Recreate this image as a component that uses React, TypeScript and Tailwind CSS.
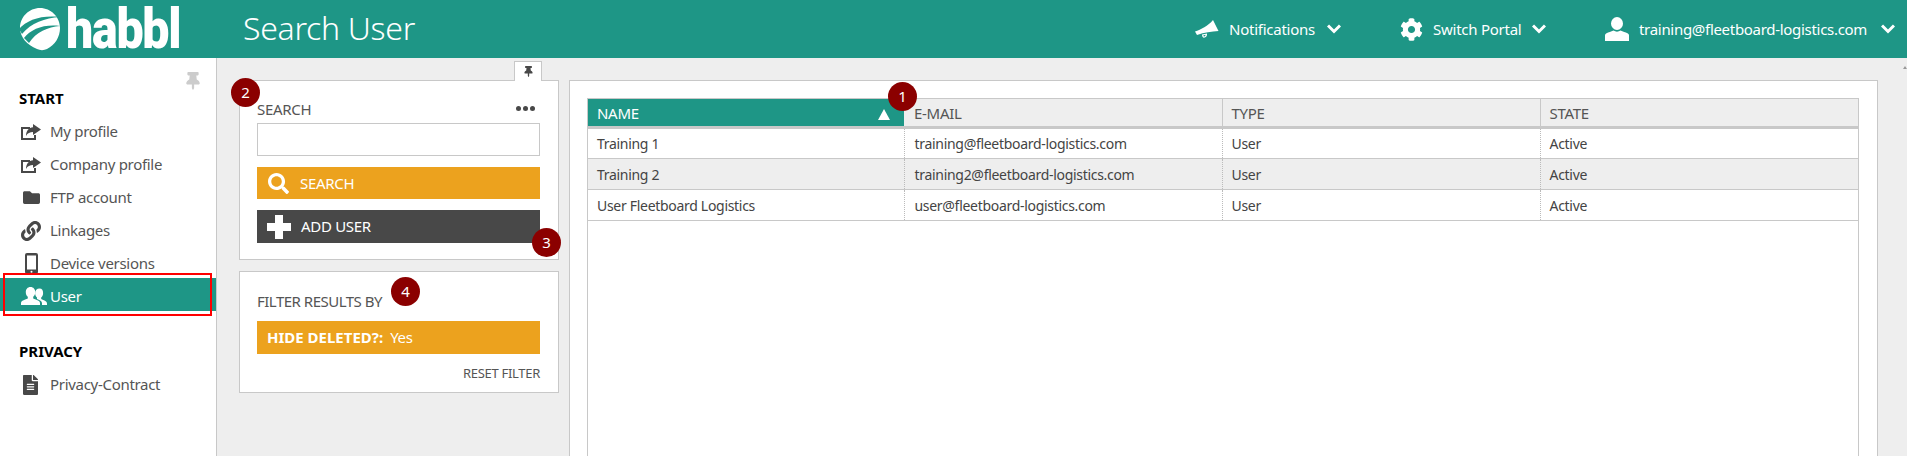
import { ReactNode } from "react"
import { FaCog, FaFileAlt, FaFolder, FaLink, FaSearch, FaThumbtack } from "react-icons/fa"

function ShareIcon() {
  return (
    <svg viewBox="0 0 20 16" className="h-[16px] w-[20px]" fill="currentColor">
      <path d="M0 3h9v2H2v9h11v-3h2v5H0z" />
      <path d="M12 0l8 5.500-8 5.500V8C9 8 6.500 9 5 12c0-5 3-8.500 7-8.700z" />
    </svg>
  )
}

function PhoneIcon() {
  return (
    <svg viewBox="0 0 13 21" className="ml-[4px] h-[21px] w-[13px]" fill="currentColor">
      <path d="M2 0h9a2 2 0 0 1 2 2v17a2 2 0 0 1-2 2H2a2 2 0 0 1-2-2V2a2 2 0 0 1 2-2zm0 2.500V16.500h9V2.500z" />
      <circle cx="6.500" cy="18.700" r="1" fill="#fff" />
    </svg>
  )
}

function UsersIcon() {
  return (
    <svg viewBox="0 0 26 19" className="h-[19px] w-[26px]" fill="currentColor">
      <path d="M18.500 1.500c-2.600 0-4.400 2-4.400 4.800 0 1.800.8 3.400 1.900 4.300v1.300c1 .5 2.400 1 3.500 1.800 1 .7 1.500 1.700 1.500 2.800V18H26v-1.300c0-1-.4-1.900-1.300-2.400-1.500-.9-3.300-1.600-4.500-2.200v-1.500c1.100-.9 1.900-2.500 1.900-4.300 0-2.800-1-4.800-3.600-4.800z" />
      <path d="M9.500 0C6.600 0 4.800 2.200 4.800 5.200c0 1.900.8 3.600 2 4.600v1.600c-1.300.6-3.800 1.200-5.800 2.500-.7.500-1 1.200-1 2V18h19v-2.100c0-.8-.4-1.500-1-2-2-1.300-4.500-1.900-5.800-2.500V9.800c1.200-1 2-2.700 2-4.600C14.200 2.200 12.400 0 9.500 0z" />
    </svg>
  )
}

function Globe() {
  return (
    <svg viewBox="0 0 42 44" className="h-[44px] w-[42px]">
      <path d="M21 1C32 1 41 10 41 21c0 9-5 17-13 21-3 1.500-7 1.500-10 0C8 38 1 30 1 21 1 10 10 1 21 1z" fill="#fff" />
      <path d="M0 22C8 13 22 8 41 10 26 11 12 16 3 27z" fill="#1e9686" />
      <path d="M5 31C12 22 25 17 41 19 29 20 17 25 10 36z" fill="#1e9686" />
    </svg>
  )
}

function Chevron() {
  return (
    <svg viewBox="0 0 14 10" className="ml-[12px] h-[10px] w-[14px]" fill="none" stroke="currentColor" strokeWidth="3">
      <path d="M1 1.500l6 6 6-6" />
    </svg>
  )
}

function Megaphone() {
  return (
    <svg viewBox="0 0 24 18" className="h-[18px] w-[24px]" fill="currentColor">
      <path d="M0 11.500C6 9.500 13 6 18 0l5.500 11c-7 .3-14 1.500-21.500 4z" />
      <path d="M7 14.500l5-1c.3 2.300-1 4.200-3 4.200-1.300 0-2-1.200-2-3.200zm1.500.7c0 1 .2 1.300.7 1.300.8 0 1.300-.8 1.300-1.700z" />
    </svg>
  )
}

function UserIcon() {
  return (
    <svg viewBox="0 0 24 24" className="h-[24px] w-[24px]" fill="currentColor">
      <ellipse cx="12" cy="6.500" rx="6" ry="6.500" />
      <path d="M8.500 13.500c2 1.500 5 1.500 7 0 2.500 1.200 5 1.800 7 2.800 1 .5 1.500 1.200 1.500 2.200V24H0v-5.500c0-1 .5-1.700 1.500-2.200 2-1 4.500-1.600 7-2.800z" />
    </svg>
  )
}

function Badge({ n, className }: { n: number; className: string }) {
  return (
    <div className={`absolute z-10 flex h-[29px] w-[29px] items-center justify-center rounded-full bg-[#8b0000] text-[15px] text-white ${className}`}>
      {n}
    </div>
  )
}

function NavItem({ icon, label, active }: { icon: ReactNode; label: string; active?: boolean }) {
  return (
    <div className={`flex h-[33px] items-center pt-[4px] pl-[21px] text-[15px] ${active ? "bg-[#1e9686] text-white" : "text-[#555]"}`}>
      <span className={`flex w-[29px] shrink-0 items-center ${active ? "text-white" : "text-[#484848]"}`}>{icon}</span>
      {label}
    </div>
  )
}

function TopItem({ icon, label, labelClass, className }: { icon: ReactNode; label: string; labelClass: string; className?: string }) {
  return (
    <div className={`flex items-center text-[15px] text-white ${className ?? ""}`}>
      <span className="mr-[10px]">{icon}</span>
      <span className={`whitespace-nowrap ${labelClass}`}>{label}</span>
      <Chevron />
    </div>
  )
}

const rows = [
  { name: "Training 1", email: "training@fleetboard-logistics.com" },
  { name: "Training 2", email: "training2@fleetboard-logistics.com" },
  { name: "User Fleetboard Logistics", email: "user@fleetboard-logistics.com" },
]

export default function App() {
  return (
    <div className="relative flex h-[456px] flex-col bg-[#eee] font-['Noto_Sans',sans-serif] tracking-[-0.3px]">
      <header className="flex h-[58px] shrink-0 items-center bg-[#1e9686] text-white">
        <div className="ml-[19px] flex w-[224px] shrink-0 items-center">
          <Globe />
          <span className="ml-[5px] origin-left scale-x-[0.88] font-['Roboto',sans-serif] text-[55px] leading-[58px] font-black tracking-[-1.5px]">habbl</span>
        </div>
        <h1 className="-mt-[2px] text-[32px] leading-[44px] font-light">Search User</h1>
        <div className="ml-auto flex items-center pr-[12px]">
          <TopItem icon={<Megaphone />} label="Notifications" labelClass="w-[86px] tracking-[-0.25px]" />
          <TopItem icon={<FaCog className="h-[23px] w-[23px]" />} label="Switch Portal" labelClass="w-[87px] tracking-[-0.25px]" className="ml-[59px]" />
          <TopItem icon={<UserIcon />} label="training@fleetboard-logistics.com" labelClass="w-[230px] tracking-[-0.3px]" className="ml-[59px]" />
        </div>
      </header>

      <div className="flex min-h-0 flex-1">
        <aside className="relative w-[217px] shrink-0 border-r border-[#c8c8c8] bg-white pt-[29px]">
          <FaThumbtack className="absolute top-[14px] left-[186px] h-[18px] w-[14px] text-[#ccc]" />
          <div className="mb-[4px] h-[22px] pl-[19px] text-[15px] leading-[22px] font-bold tracking-normal text-black">START</div>
          <NavItem icon={<ShareIcon />} label="My profile" />
          <NavItem icon={<ShareIcon />} label="Company profile" />
          <NavItem icon={<FaFolder className="ml-[1px] h-[17px] w-[19px]" />} label="FTP account" />
          <NavItem icon={<FaLink className="h-[20px] w-[20px]" />} label="Linkages" />
          <NavItem icon={<PhoneIcon />} label="Device versions" />
          <NavItem icon={<UsersIcon />} label="User" active />
          <div className="mt-[29px] mb-[4px] h-[22px] pl-[19px] text-[15px] leading-[22px] font-bold tracking-normal text-black">PRIVACY</div>
          <NavItem icon={<FaFileAlt className="ml-[1px] h-[20px] w-[17px]" />} label="Privacy-Contract" />
          {/* red callout round the active item */}
          <div className="absolute top-[215px] left-[3px] h-[43px] w-[209px] border-2 border-[#f00]" />
        </aside>

        <section className="relative ml-[22px] w-[320px] shrink-0 pt-[22px]">
          <div className="absolute top-[3px] right-[17px] flex h-[20px] w-[28px] items-center justify-center border border-b-0 border-[#c8c8c8] bg-white">
            <FaThumbtack className="h-[11px] w-[9px] text-[#484848]" />
          </div>
          <Badge n={2} className="top-[20px] -left-[8px]" />
          <Badge n={3} className="top-[170px] -right-[2px]" />
          <Badge n={4} className="top-[219px] left-[152px]" />

          <div className="border border-[#c8c8c8] bg-white pt-[18px] pr-[18px] pb-[16px] pl-[17px]">
            <div className="flex h-[20px] items-center justify-between text-[15px] text-[#555]">
              SEARCH
              <span className="mr-[5px] -mt-[2px] flex gap-[2px]">
                <i className="h-[5px] w-[5px] rounded-full bg-[#484848]" />
                <i className="h-[5px] w-[5px] rounded-full bg-[#484848]" />
                <i className="h-[5px] w-[5px] rounded-full bg-[#484848]" />
              </span>
            </div>
            <input className="mt-[4px] block h-[33px] w-full border border-[#c8c8c8] bg-white" />
            <div className="mt-[11px] flex h-[32px] items-center bg-[#eca21e] pl-[11px] text-[15px] text-white">
              <FaSearch className="mr-[11px] h-[21px] w-[21px]" />
              SEARCH
            </div>
            <div className="mt-[11px] flex h-[33px] items-center bg-[#484848] pl-[10px] text-[15px] text-white">
              <svg viewBox="0 0 24 24" className="mr-[10px] h-[24px] w-[24px]" fill="currentColor">
                <path d="M8 0h8v8h8v8h-8v8H8v-8H0V8h8z" />
              </svg>
              ADD USER
            </div>
          </div>

          <div className="mt-[11px] border border-[#c8c8c8] bg-white pt-[19px] pr-[18px] pb-[11px] pl-[17px]">
            <div className="flex h-[20px] items-center text-[15px] tracking-[-0.5px] text-[#555]">FILTER RESULTS BY</div>
            <div className="mt-[10px] flex h-[33px] items-center bg-[#eca21e] pl-[10px] text-[15px] text-white">
              <b className="mr-[7px] tracking-normal">HIDE DELETED?:</b> Yes
            </div>
            <div className="mt-[11px] h-[16px] text-right text-[13px] leading-[16px] text-[#555]">RESET FILTER</div>
          </div>
        </section>

        <main className="mt-[22px] mr-[29px] ml-[10px] flex min-w-0 flex-1 flex-col border border-b-0 border-[#c8c8c8] bg-white pt-[17px] pr-[18px] pl-[17px]">
          <div className="relative flex-1 border-x border-[#c8c8c8]">
            <Badge n={1} className="-top-[16px] left-[300px]" />
            <table className="w-full table-fixed border-collapse text-[14px] text-[#444]">
              <thead>
                <tr className="h-[29px] text-left text-[15px] text-[#555]">
                  <th className="relative w-[316px] border-t border-b-[3px] border-[#c8c8c8] bg-[#1e9686] pt-[1px] pl-[9px] font-normal text-white">
                    NAME
                    <span className="absolute top-[10px] right-[14px] h-0 w-0 border-x-[6px] border-b-[11px] border-x-transparent border-b-white" />
                  </th>
                  <th className="w-[318px] border-t border-r border-b-[3px] border-[#c8c8c8] bg-[#eee] pt-[1px] pl-[10px] font-normal">E-MAIL</th>
                  <th className="w-[318px] border-t border-r border-b-[3px] border-[#c8c8c8] bg-[#eee] pt-[1px] pl-[9px] font-normal">TYPE</th>
                  <th className="border-t border-b-[3px] border-[#c8c8c8] bg-[#eee] pt-[1px] pl-[9px] font-normal">STATE</th>
                </tr>
              </thead>
              <tbody>
                {rows.map((r, i) => (
                  <tr key={r.name} className={`h-[31px] border-b border-[#c8c8c8] ${i === 1 ? "bg-[#eee]" : "bg-white"}`}>
                    <td className="border-r border-dotted border-[#bbb] pl-[9px]">{r.name}</td>
                    <td className="border-r border-dotted border-[#bbb] pl-[10px]">{r.email}</td>
                    <td className="border-r border-dotted border-[#bbb] pl-[9px]">User</td>
                    <td className="pl-[9px]">Active</td>
                  </tr>
                ))}
              </tbody>
            </table>
          </div>
        </main>
      </div>
      {/* scrollbar arrow just visible at the window edge */}
      <div className="absolute top-[66px] right-0 h-0 w-0 border-x-[2px] border-b-[3px] border-x-transparent border-b-[#999]" />
    </div>
  )
}
